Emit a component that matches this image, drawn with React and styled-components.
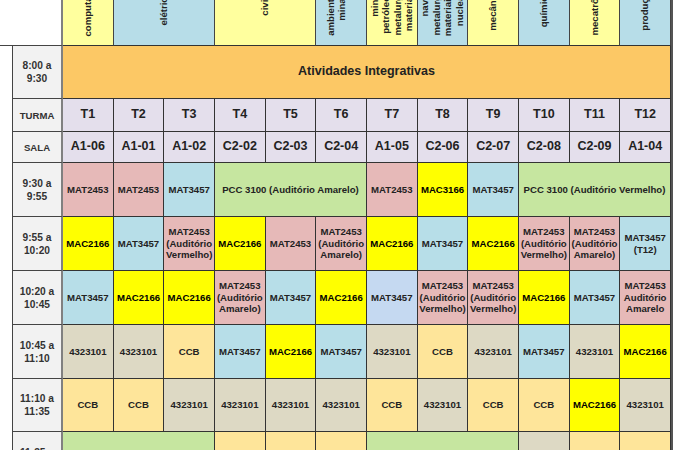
import React from 'react'
import styled, { createGlobalStyle } from 'styled-components'

const GlobalStyle = createGlobalStyle`
  body {
    margin: 0;
    background: #fff;
    font-family: "Liberation Sans", Arial, sans-serif;
  }
`

const colors = {
  hy: '#ffff9e',
  hb: '#b7dde8',
  orange: '#fcc865',
  time: '#f2f2f2',
  lav: '#e4dfec',
  pink: '#e6b9b8',
  blue: '#b7dee8',
  peri: '#c5d9f1',
  yellow: '#ffff00',
  green: '#c6e6a0',
  beige: '#ddd9c4',
  lo: '#fee59a',
}

const Page = styled.div`
  padding-left: 12px;
  height: 450px;
  overflow: hidden;
`

const Grid = styled.div`
  display: grid;
  width: 659px;
  grid-template-columns: 51px repeat(12, 1fr);
  grid-template-rows: 46px 53px 33px 31px 54px 54px 54px 54px 53px 54px;
  border-right: 2px solid #555;
`

const Corner = styled.div`
  border-right: 2px solid #808080;
  border-bottom: 1px solid #444;
  margin-left: -12px;
  background: #fff;
`

const Head = styled.div`
  grid-column: span ${(p) => p.$span || 1};
  background: ${(p) => colors[p.$bg]};
  border-right: 1px solid #444;
  border-bottom: 1px solid #333;
  overflow: hidden;
  display: flex;
  justify-content: center;
  align-items: flex-end;
  padding-right: ${(p) => p.$shift || 0}px;
`

const HeadLine = styled.span`
  writing-mode: vertical-rl;
  transform: rotate(180deg);
  white-space: nowrap;
  font-size: 9.6px;
  font-weight: bold;
  line-height: 11.5px;
  color: #222;
  margin-bottom: ${(p) => p.$mb}px;
`

const Time = styled.div`
  background: ${colors.time};
  border-left: 1px solid #444;
  border-right: 2px solid #808080;
  border-bottom: 1px solid #444;
  display: flex;
  align-items: center;
  justify-content: center;
  text-align: center;
  font-size: ${(p) => (p.$small ? 9.6 : 10.2)}px;
  font-weight: bold;
  line-height: 13px;
  color: #333;
  white-space: pre-line;
`

const Cell = styled.div`
  grid-column: span ${(p) => p.$span || 1};
  background: ${(p) => colors[p.$bg]};
  border-right: 1px solid #333;
  border-bottom: 1px solid #333;
  display: flex;
  align-items: center;
  justify-content: center;
  text-align: center;
  font-size: ${(p) => p.$size || 9.6}px;
  font-weight: bold;
  line-height: 11.5px;
  color: ${(p) => (p.$bg === 'yellow' ? '#000' : '#222')};
  white-space: pre-line;
`

const headers = [
  { bg: 'hy', lines: [['computação', 8]] },
  { bg: 'hb', span: 2, lines: [['elétrica', 19]] },
  { bg: 'hy', span: 2, lines: [['civil', 29]] },
  { bg: 'hb', shift: 10, lines: [['ambiental', 9], ['minas', 24]] },
  { bg: 'hy', lines: [['minas', 28], ['petróleo', 11], ['metalurgia', 9], ['materiais', 14]] },
  { bg: 'hb', lines: [['naval', 28], ['metalurgia', 9], ['materiais', 9], ['nuclear', 19]] },
  { bg: 'hy', lines: [['mecânica', 14]] },
  { bg: 'hb', lines: [['química', 18]] },
  { bg: 'hy', lines: [['mecatrônica', 9]] },
  { bg: 'hb', lines: [['produção', 14]] },
]

const turmas = ['T1', 'T2', 'T3', 'T4', 'T5', 'T6', 'T7', 'T8', 'T9', 'T10', 'T11', 'T12']
const salas = ['A1-06', 'A1-01', 'A1-02', 'C2-02', 'C2-03', 'C2-04', 'A1-05', 'C2-06', 'C2-07', 'C2-08', 'C2-09', 'A1-04']

const AV = 'MAT2453\n(Auditório\nVermelho)'
const AA = 'MAT2453\n(Auditório\nAmarelo)'

const slots = [
  {
    time: '9:30 a\n9:55',
    cells: [
      ['MAT2453', 'pink'], ['MAT2453', 'pink'], ['MAT3457', 'blue'],
      ['PCC 3100 (Auditório Amarelo)', 'green', 3],
      ['MAT2453', 'pink'], ['MAC3166', 'yellow'], ['MAT3457', 'blue'],
      ['PCC 3100 (Auditório Vermelho)', 'green', 3],
    ],
  },
  {
    time: '9:55 a\n10:20',
    cells: [
      ['MAC2166', 'yellow'], ['MAT3457', 'blue'], [AV, 'pink'], ['MAC2166', 'yellow'],
      ['MAT2453', 'pink'], [AA, 'pink'], ['MAC2166', 'yellow'], ['MAT3457', 'blue'],
      ['MAC2166', 'yellow'], [AV, 'pink'], [AA, 'pink'], ['MAT3457\n(T12)', 'blue'],
    ],
  },
  {
    time: '10:20 a\n10:45',
    cells: [
      ['MAT3457', 'blue'], ['MAC2166', 'yellow'], ['MAC2166', 'yellow'], [AA, 'pink'],
      ['MAT3457', 'blue'], ['MAC2166', 'yellow'], ['MAT3457', 'peri'], [AV, 'pink'],
      [AV, 'pink'], ['MAC2166', 'yellow'], ['MAT3457', 'blue'],
      ['MAT2453\nAuditório\nAmarelo', 'pink'],
    ],
  },
  {
    time: '10:45 a\n11:10',
    cells: [
      ['4323101', 'beige'], ['4323101', 'beige'], ['CCB', 'lo'], ['MAT3457', 'blue'],
      ['MAC2166', 'yellow'], ['MAT3457', 'blue'], ['4323101', 'beige'], ['CCB', 'lo'],
      ['4323101', 'beige'], ['MAT3457', 'blue'], ['4323101', 'beige'], ['MAC2166', 'yellow'],
    ],
  },
  {
    time: '11:10 a\n11:35',
    cells: [
      ['CCB', 'lo'], ['CCB', 'lo'], ['4323101', 'beige'], ['4323101', 'beige'],
      ['4323101', 'beige'], ['4323101', 'beige'], ['CCB', 'lo'], ['4323101', 'beige'],
      ['CCB', 'lo'], ['CCB', 'lo'], ['MAC2166', 'yellow'], ['4323101', 'beige'],
    ],
  },
  {
    time: '11:35 a\n12:00',
    cells: [
      ['', 'green', 3], ['', 'lo'], ['', 'lo'], ['', 'lo'],
      ['', 'green', 3], ['', 'beige'], ['', 'lo'], ['', 'lo'],
    ],
  },
]

export default function App() {
  return (
    <Page>
      <GlobalStyle />
      <Grid>
        <Corner />
        {headers.map((h, i) => (
          <Head key={i} $bg={h.bg} $span={h.span} $shift={h.shift}>
            {h.lines.map(([t, mb]) => (
              <HeadLine key={t} $mb={mb}>{t}</HeadLine>
            ))}
          </Head>
        ))}

        <Time>{'8:00 a\n9:30'}</Time>
        <Cell $bg="orange" $span={12} $size={12.5}>Atividades Integrativas</Cell>

        <Time $small>TURMA</Time>
        {turmas.map((t) => (
          <Cell key={t} $bg="lav" $size={12.5}>{t}</Cell>
        ))}

        <Time $small>SALA</Time>
        {salas.map((s) => (
          <Cell key={s} $bg="lav" $size={12.5}>{s}</Cell>
        ))}

        {slots.map((row) => (
          <React.Fragment key={row.time}>
            <Time>{row.time}</Time>
            {row.cells.map(([text, bg, span], i) => (
              <Cell key={i} $bg={bg} $span={span}>{text}</Cell>
            ))}
          </React.Fragment>
        ))}
      </Grid>
    </Page>
  )
}
